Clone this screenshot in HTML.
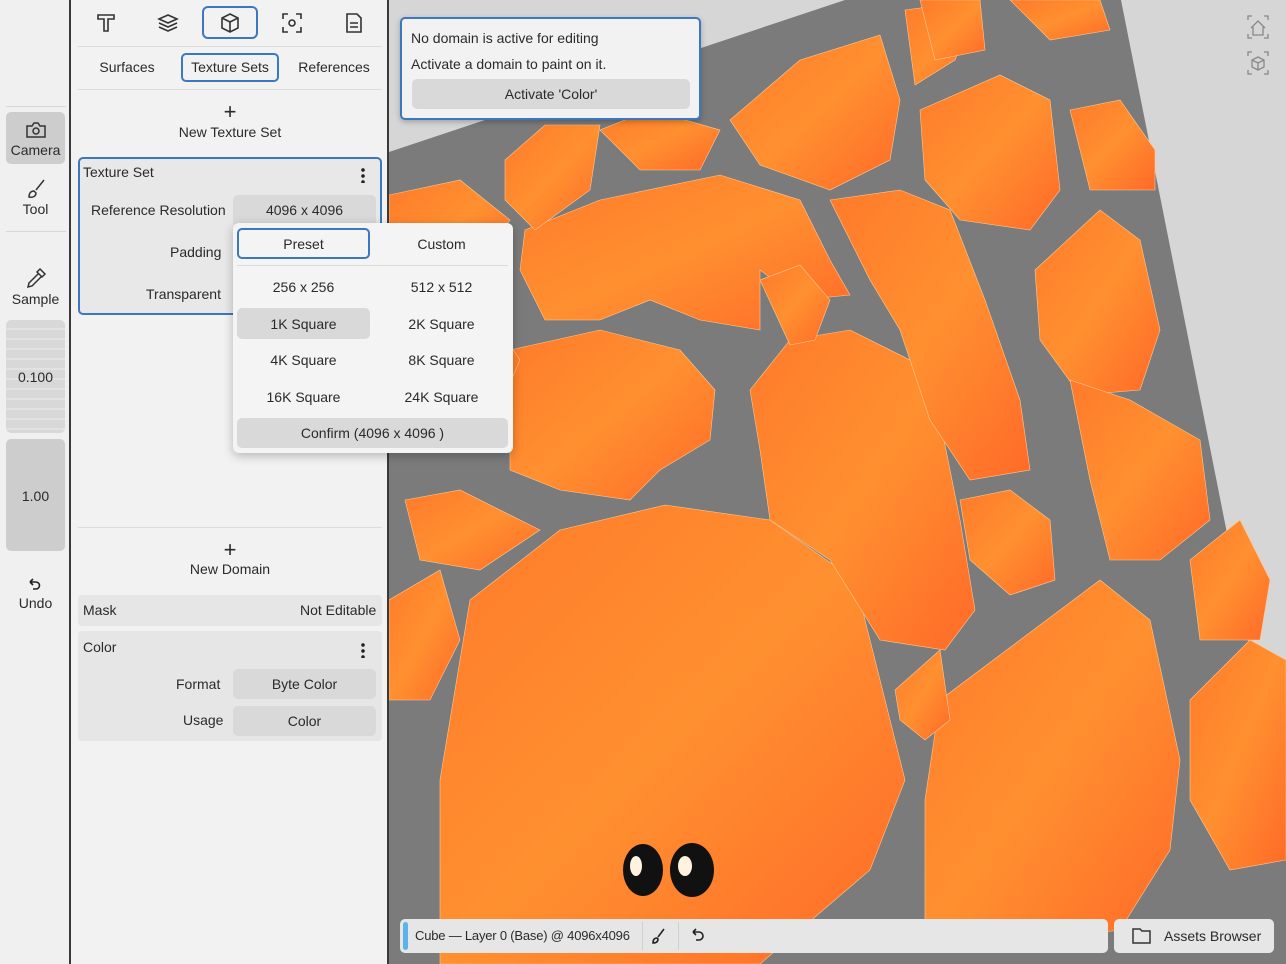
<!DOCTYPE html>
<html><head><meta charset="utf-8"><style>
*{box-sizing:border-box;margin:0;padding:0}
body{width:1286px;height:964px;overflow:hidden;position:relative;font-family:"Liberation Sans",sans-serif;color:#2a2a2a;background:#d6d6d6}
.abs{position:absolute}
.rail{left:0;top:0;width:71px;height:964px;background:#f0f0f0;border-right:2px solid #3a3a3a}
.panel{left:71px;top:0;width:318px;height:964px;background:#f2f2f2;border-right:2px solid #3a3a3a}
.t{position:absolute;font-size:14px;white-space:nowrap}
.c{text-align:center}
.btn{position:absolute;background:#d9d9d9;border-radius:5px;font-size:14px;text-align:center}
.sep{position:absolute;height:1px;background:#dcdcdc}
.keb{position:absolute;width:4px;height:16px;background:radial-gradient(circle,#222 1.6px,transparent 2px) 0 0/4px 6px repeat-y}
</style></head><body>
<svg class="abs" style="left:389px;top:0" width="897" height="964" viewBox="389 0 897 964">
<rect x="389" y="0" width="897" height="964" fill="#d6d6d6"/>
<polygon points="389,152 860,-5 1120,-5 1286,830 1286,964 389,964" fill="#7b7b7b"/>
<defs><linearGradient id="g" x1="0" y1="0" x2="1" y2="1"><stop offset="0" stop-color="#ff7a2a"/><stop offset="0.5" stop-color="#ff9030"/><stop offset="1" stop-color="#ff6a28"/></linearGradient></defs>
<g fill="url(#g)" stroke="#ffc890" stroke-width="0.6">
<polygon points="470,600 560,530 665,505 770,520 855,580 880,680 905,780 870,870 760,964 440,964 440,780"/>
<polygon points="940,700 1100,580 1150,620 1180,760 1170,850 1120,930 1040,940 925,930 925,800"/>
<polygon points="525,230 600,200 720,175 800,200 830,260 850,295 800,300 760,270 760,330 700,320 650,300 600,320 545,320 520,270"/>
<polygon points="510,350 600,330 680,350 715,390 710,440 660,470 630,500 560,490 510,470"/>
<polygon points="750,390 790,340 850,330 910,360 940,420 960,520 975,610 945,650 880,640 830,560 770,520 760,450"/>
<polygon points="830,200 900,190 950,210 985,300 1020,400 1030,470 970,480 930,420 900,330 870,280"/>
<polygon points="730,120 800,60 880,35 900,100 890,160 830,190 760,165"/>
<polygon points="920,110 1000,75 1050,100 1060,190 1030,230 960,220 925,180"/>
<polygon points="1035,270 1100,210 1140,240 1160,330 1140,390 1080,395 1040,340"/>
<polygon points="1070,380 1130,400 1200,440 1210,520 1160,560 1110,560 1090,480"/>
<polygon points="1070,110 1120,100 1155,150 1155,190 1090,190"/>
<polygon points="905,10 980,0 955,60 915,85"/>
<polygon points="1010,0 1100,0 1110,30 1050,40"/>
<polygon points="600,130 650,110 720,130 700,170 640,170"/>
<polygon points="505,160 545,125 600,125 590,190 535,230 505,200"/>
<polygon points="389,195 460,180 510,220 470,270 389,280"/>
<polygon points="389,300 480,300 520,360 490,430 389,440"/>
<polygon points="405,500 460,490 540,530 480,570 420,560"/>
<polygon points="389,600 440,570 460,640 430,700 389,700"/>
<polygon points="960,500 1010,490 1050,520 1055,580 1010,595 970,560"/>
<polygon points="1190,560 1240,520 1270,580 1260,640 1200,640"/>
<polygon points="1190,700 1250,640 1286,660 1286,860 1230,870 1190,800"/>
<polygon points="895,690 940,650 950,720 925,740 900,720"/>
<polygon points="760,280 800,265 830,300 815,340 790,345"/>
<polygon points="920,0 980,0 985,50 935,60"/>
</g>
<ellipse cx="643" cy="870" rx="20" ry="26" fill="#111"/><ellipse cx="692" cy="870" rx="22" ry="27" fill="#111"/>
<ellipse cx="636" cy="866" rx="6" ry="10" fill="#fff3e0"/><ellipse cx="685" cy="866" rx="7" ry="10" fill="#fff3e0"/>
<g fill="none" stroke="#888" stroke-width="1.3">
<path d="M1248 20v-4h4M1264 16h4v4M1268 34v4h-4M1252 38h-4v-4"/><path d="M1251 28l7-7 7 7M1253 27v8h10v-8"/>
<path d="M1248 56v-4h4M1264 52h4v4M1268 70v4h-4M1252 74h-4v-4"/><path d="M1258 57l6 3v7l-6 3-6-3v-7zM1252 60l6 3 6-3M1258 63v7"/>
</g>
</svg>

<div class="abs" style="left:400px;top:17px;width:301px;height:103px;background:#f2f2f2;border:2px solid #3c78c0;border-radius:5px;box-shadow:0 2px 6px rgba(0,0,0,.25)"></div>
<div class="t" style="left:411px;top:30px">No domain is active for editing</div>
<div class="t" style="left:411px;top:56px">Activate a domain to paint on it.</div>
<div class="btn" style="left:412px;top:79px;width:278px;height:30px;line-height:30px">Activate 'Color'</div>

<div class="abs" style="left:400px;top:919px;width:708px;height:34px;background:#e6e6e6;border-radius:5px"></div>
<div class="abs" style="left:403px;top:922px;width:5px;height:28px;background:#5ab4ea;border-radius:3px"></div>
<div class="t" style="left:415px;top:928px;font-size:13px;letter-spacing:-0.2px">Cube — Layer 0 (Base) @ 4096x4096</div>
<div class="abs" style="left:642px;top:922px;width:1px;height:28px;background:#d0d0d0"></div>
<div class="abs" style="left:678px;top:922px;width:1px;height:28px;background:#d0d0d0"></div>
<svg class="abs" style="left:648px;top:925px" width="22" height="22"><path d="M16 4l-6 8M5 18c0-3 1-5 4-5l1 1c0 3-2 4-5 4z" fill="none" stroke="#222" stroke-width="1.6"/></svg>
<svg class="abs" style="left:688px;top:926px" width="20" height="20"><path d="M5 6h6a4 4 0 010 8H8M5 6l3-3M5 6l3 3" fill="none" stroke="#222" stroke-width="1.6"/></svg>
<div class="abs" style="left:1114px;top:919px;width:160px;height:34px;background:#e6e6e6;border-radius:5px"></div>
<svg class="abs" style="left:1131px;top:926px" width="22" height="20"><path d="M2 3h7l2 2h8v12H2z" fill="none" stroke="#333" stroke-width="1.5"/></svg>
<div class="t" style="left:1164px;top:928px">Assets Browser</div>

<div class="abs rail"></div>
<div class="sep" style="left:6px;top:106px;width:60px;background:#d8d8d8"></div>
<div class="abs" style="left:6px;top:112px;width:59px;height:52px;background:#cdcdcd;border-radius:5px"></div>
<svg class="abs" style="left:24px;top:120px" width="24" height="20"><path d="M3 6h5l2-3h4l2 3h5v11H3z" fill="none" stroke="#333" stroke-width="1.5"/><circle cx="12" cy="11" r="3" fill="none" stroke="#333" stroke-width="1.5"/></svg>
<div class="t c" style="left:0;width:71px;top:142px">Camera</div>
<svg class="abs" style="left:24px;top:177px" width="24" height="24"><path d="M20 3l-8 10M5 20c0-4 2-6 5-6l2 2c0 3-3 5-7 4z" fill="none" stroke="#333" stroke-width="1.5"/></svg>
<div class="t c" style="left:0;width:71px;top:201px">Tool</div>
<div class="sep" style="left:6px;top:231px;width:60px;background:#d8d8d8"></div>
<svg class="abs" style="left:24px;top:266px" width="24" height="24"><path d="M16 3l5 5-3 3-5-5zM14 8l-9 9-1 4 4-1 9-9" fill="none" stroke="#333" stroke-width="1.5"/></svg>
<div class="t c" style="left:0;width:71px;top:291px">Sample</div>
<div class="abs" style="left:6px;top:320px;width:59px;height:113px;background:repeating-linear-gradient(#d8d8d8 0 8px,#e2e2e2 8px 10px);border-radius:5px"></div>
<div class="t c" style="left:0;width:71px;top:369px">0.100</div>
<div class="abs" style="left:6px;top:439px;width:59px;height:112px;background:#cdcdcd;border-radius:5px"></div>
<div class="t c" style="left:0;width:71px;top:488px">1.00</div>
<svg class="abs" style="left:27px;top:577px" width="16" height="16"><path d="M3 5h6a3.5 3.5 0 010 7H6M3 5l3-3M3 5l3 3" fill="none" stroke="#222" stroke-width="1.6"/></svg>
<div class="t c" style="left:0;width:71px;top:595px">Undo</div>

<div class="abs panel"></div>
<div class="abs" style="left:202px;top:6px;width:56px;height:33px;border:2px solid #3c78c0;border-radius:6px"></div>
<svg class="abs" style="left:94px;top:11px" width="24" height="24" fill="none" stroke="#333" stroke-width="1.6"><path d="M4 4h16v4h-6v12h-4V8H4z"/></svg>
<svg class="abs" style="left:156px;top:11px" width="24" height="24" fill="none" stroke="#333" stroke-width="1.6"><path d="M12 4l9 4-9 4-9-4zM3 12l9 4 9-4M3 16l9 4 9-4"/></svg>
<svg class="abs" style="left:218px;top:11px" width="24" height="24" fill="none" stroke="#333" stroke-width="1.6"><path d="M12 3l8 4v10l-8 4-8-4V7zM4 7l8 4 8-4M12 11v10"/></svg>
<svg class="abs" style="left:280px;top:11px" width="24" height="24" fill="none" stroke="#333" stroke-width="1.6"><path d="M3 8V3h5M16 3h5v5M21 16v5h-5M8 21H3v-5"/><circle cx="12" cy="12" r="3"/></svg>
<svg class="abs" style="left:342px;top:11px" width="24" height="24" fill="none" stroke="#333" stroke-width="1.6"><path d="M5 3h10l4 4v14H5zM8 12h8M8 16h8"/></svg>
<div class="sep" style="left:78px;top:46px;width:304px"></div>
<div class="t c" style="left:86px;width:82px;top:59px">Surfaces</div>
<div class="abs" style="left:181px;top:53px;width:98px;height:29px;border:2px solid #3c78c0;border-radius:5px"></div>
<div class="t c" style="left:181px;width:98px;top:59px">Texture Sets</div>
<div class="t c" style="left:290px;width:88px;top:59px">References</div>
<div class="sep" style="left:78px;top:89px;width:304px"></div>
<div class="t c" style="left:72px;width:316px;top:101px;font-size:22px;line-height:22px">+</div>
<div class="t c" style="left:72px;width:316px;top:124px">New Texture Set</div>
<div class="abs" style="left:78px;top:157px;width:304px;height:158px;border:2px solid #3c78c0;border-radius:5px;background:#e8e8e8"></div>
<div class="t" style="left:83px;top:164px">Texture Set</div>
<div class="keb" style="left:361px;top:167px"></div>
<div class="t" style="left:91px;top:202px">Reference Resolution</div>
<div class="btn" style="left:233px;top:195px;width:143px;height:31px;line-height:31px">4096 x 4096</div>
<div class="t" style="left:170px;top:244px">Padding</div>
<div class="t" style="left:146px;top:286px">Transparent</div>
<div class="sep" style="left:78px;top:527px;width:304px"></div>
<div class="t c" style="left:72px;width:316px;top:539px;font-size:22px;line-height:22px">+</div>
<div class="t c" style="left:72px;width:316px;top:561px">New Domain</div>
<div class="abs" style="left:78px;top:595px;width:304px;height:31px;background:#e6e6e6;border-radius:4px"></div>
<div class="t" style="left:83px;top:602px">Mask</div>
<div class="t" style="left:300px;top:602px">Not Editable</div>
<div class="abs" style="left:78px;top:631px;width:304px;height:110px;background:#e6e6e6;border-radius:4px"></div>
<div class="t" style="left:83px;top:639px">Color</div>
<div class="keb" style="left:361px;top:642px"></div>
<div class="t" style="left:176px;top:676px">Format</div>
<div class="btn" style="left:233px;top:669px;width:143px;height:30px;line-height:30px">Byte Color</div>
<div class="t" style="left:183px;top:712px">Usage</div>
<div class="btn" style="left:233px;top:706px;width:143px;height:30px;line-height:30px">Color</div>

<div class="abs" style="left:233px;top:223px;width:280px;height:230px;background:#f4f4f4;border-radius:6px;box-shadow:0 3px 10px rgba(0,0,0,.25)"></div>
<div class="abs" style="left:237px;top:228px;width:133px;height:31px;border:2px solid #3c78c0;border-radius:5px"></div>
<div class="t c" style="left:237px;width:133px;top:236px">Preset</div>
<div class="t c" style="left:375px;width:133px;top:236px">Custom</div>
<div class="sep" style="left:237px;top:265px;width:271px"></div>
<div class="t c" style="left:237px;width:133px;top:279px">256 x 256</div>
<div class="t c" style="left:375px;width:133px;top:279px">512 x 512</div>
<div class="btn" style="left:237px;top:308px;width:133px;height:31px"></div>
<div class="t c" style="left:237px;width:133px;top:316px">1K Square</div>
<div class="t c" style="left:375px;width:133px;top:316px">2K Square</div>
<div class="t c" style="left:237px;width:133px;top:352px">4K Square</div>
<div class="t c" style="left:375px;width:133px;top:352px">8K Square</div>
<div class="t c" style="left:237px;width:133px;top:389px">16K Square</div>
<div class="t c" style="left:375px;width:133px;top:389px">24K Square</div>
<div class="btn" style="left:237px;top:418px;width:271px;height:30px;line-height:30px">Confirm (4096 x 4096 )</div>
</body></html>
